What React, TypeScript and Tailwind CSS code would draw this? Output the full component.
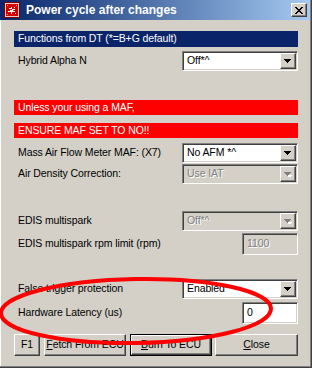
import React from "react";

const sunken =
  "border border-t-[#808080] border-l-[#808080] border-b-white border-r-white shadow-[inset_1px_1px_0_#404040,inset_-1px_-1px_0_#d4d0c8]";
const raised =
  "border border-t-white border-l-white border-b-[#404040] border-r-[#404040] shadow-[inset_-1px_-1px_0_#808080]";

function Arrow({ disabled }: { disabled?: boolean }) {
  return (
    <div className={`w-[16px] h-full bg-[#d4d0c8] flex items-center justify-center ${raised}`}>
      <svg width="8" height="5" viewBox="0 0 8 5" shapeRendering="crispEdges">
        {disabled && <path d="M2 2h5v1H2zM3 3h3v1H3zM4 4h1v1H4z" fill="#fff" transform="translate(1 1)" />}
        <path d="M0 0h7v1H0zM1 1h5v1H1zM2 2h3v1H2zM3 3h1v1H3z" fill={disabled ? "#808080" : "#000"} />
      </svg>
    </div>
  );
}

function Combo({ value, disabled }: { value: string; disabled?: boolean }) {
  return (
    <div className={`w-[116px] h-[20px] flex ${sunken} ${disabled ? "bg-[#d4d0c8]" : "bg-white"} p-[1px]`}>
      <div
        className={`flex-1 flex items-center pl-[3px] whitespace-nowrap ${
          disabled ? "text-[#808080] [text-shadow:1px_1px_0_#fff]" : "text-black"
        }`}
      >
        {value}
      </div>
      <Arrow disabled={disabled} />
    </div>
  );
}

function TextBox({ value, disabled }: { value: string; disabled?: boolean }) {
  return (
    <div
      className={`w-[56px] h-[22px] flex items-center pl-[4px] ${sunken} ${
        disabled ? "bg-[#d4d0c8] text-[#808080] [text-shadow:1px_1px_0_#fff]" : "bg-white text-black"
      }`}
    >
      {value}
    </div>
  );
}

function Row({ label, children, className }: { label: string; children: React.ReactNode; className: string }) {
  return (
    <div className={`flex items-center justify-between ${className}`}>
      <span className="pl-[4px] whitespace-nowrap">{label}</span>
      {children}
    </div>
  );
}

function Button({ children, width, isDefault }: { children: React.ReactNode; width: string; isDefault?: boolean }) {
  return (
    <div className={`${width} h-[22px] ${isDefault ? "border border-black" : ""}`}>
      <div className={`h-full w-full flex items-center justify-center whitespace-nowrap bg-[#d4d0c8] ${raised}`}>
        {children}
      </div>
    </div>
  );
}

export default function App() {
  return (
    <div className="relative w-[312px] h-[368px] bg-[#d4d0c8] overflow-hidden font-['Liberation_Sans',Arial,sans-serif] text-[10.5px] tracking-[-0.1px] text-black shadow-[inset_-1px_-1px_0_#404040,inset_-2px_-2px_0_#808080,inset_1px_0_0_#fff]">
      {/* title bar */}
      <div className="h-[20px] mr-[2px] flex items-center bg-gradient-to-r from-[#0a246a] to-[#a6caf0]">
        <svg width="16" height="16" viewBox="0 0 16 16" className="ml-[4px]" shapeRendering="crispEdges">
          <rect x="0" y="0" width="16" height="16" fill="#7a0000" />
          <rect x="1" y="1" width="14" height="14" fill="#e8d0d0" />
          <rect x="2" y="2" width="12" height="12" fill="#d40000" />
          <path d="M5 6h2v1H5zM7 5h1v2H7zM8 7h3v1H8zM6 8h3v2H6zM9 9h2v1H9zM4 9h2v1H4zM7 10h1v2H7zM10 5h1v1h-1zM11 11h1v1h-1z" fill="#fff" />
          <path d="M3 3h1v1H3zM12 3h1v1h-1zM3 12h1v1H3z" fill="#ff8080" />
        </svg>
        <span className="ml-[6px] text-white font-bold text-[12px] tracking-normal">Power cycle after changes</span>
        <div className="ml-auto mr-[3px] w-[16px] h-[14px] bg-[#d4d0c8] flex items-center justify-center border border-t-white border-l-white border-b-[#404040] border-r-[#404040] shadow-[inset_-1px_-1px_0_#808080]">
          <svg width="8" height="7" viewBox="0 0 8 7" shapeRendering="crispEdges">
            <path d="M0 0h2v1H0zM1 1h2v1H1zM2 2h2v1H2zM3 3h2v1H3zM2 4h2v1H2zM1 5h2v1H1zM0 6h2v1H0zM6 0h2v1H6zM5 1h2v1H5zM4 2h2v1H4zM4 4h2v1H4zM5 5h2v1H5zM6 6h2v1H6z" fill="#000" />
          </svg>
        </div>
      </div>

      <div className="flex flex-col px-[14px]">
        <div className="mt-[11px] h-[16px] bg-[#0a246a] text-white flex items-center pl-[4px]">
          Functions from DT (*=B+G default)
        </div>
        <Row label="Hybrid Alpha N" className="mt-[4px]">
          <Combo value="Off*^" />
        </Row>

        <div className="mt-[29px] h-[15px] bg-[#ff0000] text-white flex items-center pl-[4px]">Unless your using a MAF,</div>
        <div className="mt-[8px] h-[15px] bg-[#ff0000] text-white flex items-center pl-[4px]">ENSURE MAF SET TO NO!!</div>

        <Row label="Mass Air Flow Meter MAF: (X7)" className="mt-[5px]">
          <Combo value="No AFM *^" />
        </Row>
        <Row label="Air Density Correction:" className="mt-[1px]">
          <Combo value="Use IAT" disabled />
        </Row>

        <Row label="EDIS multispark" className="mt-[27px]">
          <Combo value="Off*^" disabled />
        </Row>
        <Row label="EDIS multispark rpm limit (rpm)" className="mt-[2px]">
          <TextBox value="1100" disabled />
        </Row>

        <Row label="False trigger protection" className="mt-[24px]">
          <Combo value="Enabled*" />
        </Row>
        <Row label="Hardware Latency (us)" className="mt-[3px]">
          <TextBox value="0" />
        </Row>

        <div className="mt-[10px] flex items-center">
          <Button width="w-[27px]">F1</Button>
          <div className="ml-[4px]">
            <Button width="w-[82px]">
              <span><u>F</u>etch From ECU</span>
            </Button>
          </div>
          <div className="ml-[4px]">
            <Button width="w-[82px]" isDefault>
              <span><u>B</u>urn To ECU</span>
            </Button>
          </div>
          <div className="ml-[3px]">
            <Button width="w-[83px]">
              <span><u>C</u>lose</span>
            </Button>
          </div>
        </div>
      </div>

      {/* hand-drawn annotation */}
      <svg className="absolute left-0 top-0 pointer-events-none" width="312" height="368" viewBox="0 0 312 368">
        <ellipse cx="136" cy="311" rx="135" ry="32" fill="none" stroke="#ff0000" strokeWidth="4" transform="rotate(-1 136 311)" />
      </svg>
    </div>
  );
}
